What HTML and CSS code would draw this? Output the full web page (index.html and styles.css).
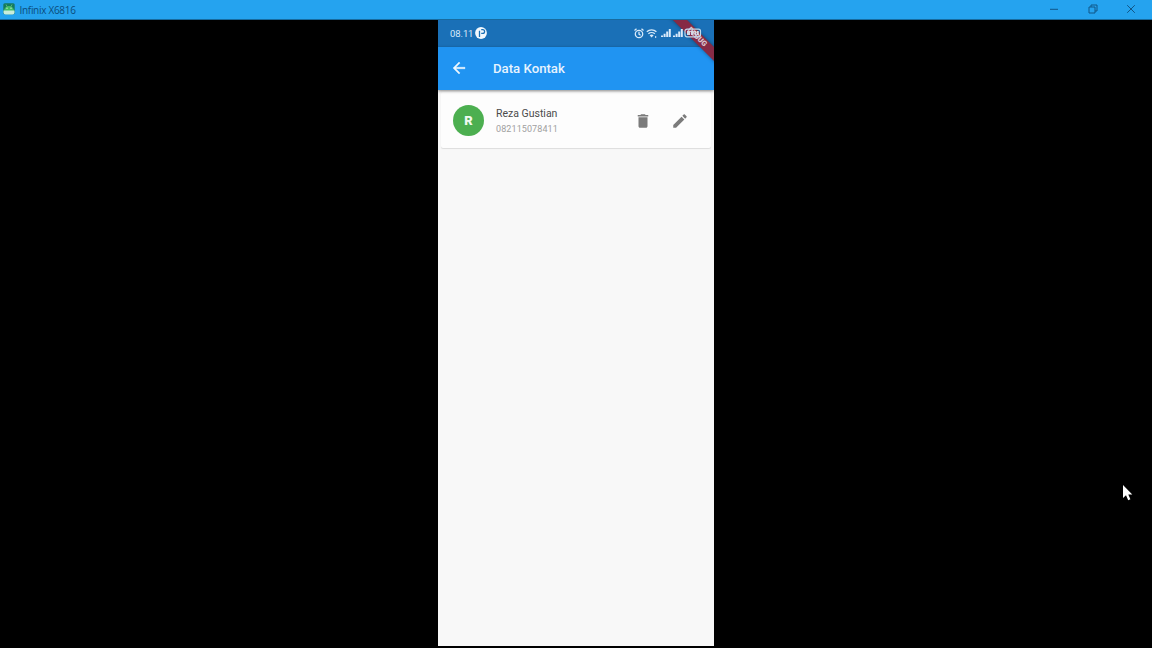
FILE: index.html
```html
<!DOCTYPE html>
<html lang="id">
<head>
<meta charset="utf-8">
<title>Infinix X6816</title>
<link rel="stylesheet" href="styles.css">
</head>
<body>
<div class="window">
  <header class="titlebar">
    <svg class="app-icon" width="12" height="12" viewBox="0 0 12 12">
      <rect x=".3" y=".3" width="11.4" height="11" rx="1.5" fill="#16795f"/>
      <path d="M1 8a5 5 0 0 1 10 0z" fill="#43bd68"/>
      <path d="M3 1.5l1 2M9 1.5l-1 2" stroke="#62c77c" stroke-width=".8"/>
      <path d="M.5 7.500h11v2a2 2 0 0 1-2 2h-7a2 2 0 0 1-2-2z" fill="#c9edda"/>
      <path d="M3.5 5.2h1M7.500 5.2h1" stroke="#fff"/>
    </svg>
    <span class="window-title">Infinix X6816</span>
    <div class="window-controls">
      <svg width="10" height="10" viewBox="0 0 10 10"><path d="M1 5.300h8"/></svg>
      <svg width="10" height="10" viewBox="0 0 10 10"><path d="M1 3h6v6H1zM3 3V1h6v6H7"/></svg>
      <svg width="10" height="10" viewBox="0 0 10 10"><path d="M1.200 1.200l7.600 7.600M8.800 1.200L1.200 8.800"/></svg>
    </div>
  </header>
  <main class="stage">
    <section class="phone">
      <div class="statusbar">
        <span class="clock">08.11</span>
        <svg class="notice" width="12" height="12" viewBox="0 0 12 12">
          <circle cx="6" cy="6" r="5.900" fill="#f2f8fd"/>
          <path d="M4.500 10V3.700M6.200 2.600h1.500a1.700 1.700 0 0 1 0 3.800H6.200" fill="none" stroke="#1a70b7" stroke-width="1.300"/>
        </svg>
        <div class="signals">
          <svg width="10" height="11" viewBox="0 0 10 11" fill="none" stroke="#d9eafa" stroke-width="1.300">
            <circle cx="5" cy="6" r="3.700"/><path d="M5 3.800v2.400l1.600 1M.5 2.500L2.500 .8M9.500 2.500L7.500 .8"/>
          </svg>
          <svg width="12" height="11" viewBox="0 0 12 11" fill="none" stroke="#d9eafa" stroke-width="1.300">
            <path d="M.8 3.800a7 7 0 0 1 9.600 0M2.400 5.800a4.700 4.700 0 0 1 6.400 0"/><path d="M3.600 7.300a3 3 0 0 1 4 0l-2 2.300z" fill="#d9eafa" stroke="none"/><path d="M9.700 8v2" stroke-width="1"/>
          </svg>
          <svg width="10" height="10" viewBox="0 0 10 10" fill="none" stroke="#d9eafa" stroke-width="2">
            <path d="M1 9V7.500M3.600 9V5.700M6.200 9V3.500M8.800 9V1"/>
          </svg>
          <svg width="10" height="10" viewBox="0 0 10 10" fill="none" stroke="#d9eafa" stroke-width="2">
            <path d="M1 9V7.500M3.600 9V5.700M6.200 9V3.500M8.800 9V1"/>
          </svg>
          <svg class="battery" width="18" height="10" viewBox="0 0 18 10">
            <path d="M3 1.200h11.500a2 2 0 0 1 2 2v3.600a2 2 0 0 1-2 2H3a2 2 0 0 1-2-2V3.200a2 2 0 0 1 2-2z" fill="none" stroke="#c4d9eb" stroke-width="1.200"/>
            <path d="M3 3h3v4H3zM7 3h2.500v4H7zM10.500 3h1.700v4h-1.700zM13 3h1.800v4H13z" fill="#d4dae6"/>
          </svg>
        </div>
      </div>
      <div class="appbar">
        <svg class="back" width="18" height="18" viewBox="0 0 24 24"><path d="M20 11H7.830l5.590-5.590L12 4l-8 8 8 8 1.410-1.410L7.830 13H20v-2z"/></svg>
        <h1 class="heading">Data Kontak</h1>
      </div>
      <article class="contact">
        <div class="avatar">R</div>
        <div class="details">
          <div class="name">Reza Gustian</div>
          <div class="number">082115078411</div>
        </div>
        <div class="actions">
          <svg width="18" height="18" viewBox="0 0 24 24"><path d="M6 19c0 1.100.9 2 2 2h8c1.100 0 2-.9 2-2V7H6v12zM19 4h-3.500l-1-1h-5l-1 1H5v2h14V4z"/></svg>
          <svg width="18" height="18" viewBox="0 0 24 24"><path d="M3 17.250V21h3.750L17.810 9.940l-3.750-3.750L3 17.250zM20.710 7.040c.390-.390.390-1.020 0-1.410l-2.340-2.340c-.390-.390-1.020-.390-1.410 0l-1.830 1.830 3.750 3.750 1.830-1.830z"/></svg>
        </div>
      </article>
      <div class="debug-banner">DEBUG</div>
    </section>
  </main>
</div>
<svg class="cursor" width="12" height="18" viewBox="0 0 12 18"><path d="M1 1v13l3-2.800 2.200 5 2.200-1-2.100-4.800h4z"/></svg>
</body>
</html>
```
FILE: styles.css
```css
* { box-sizing: border-box; }
body {
  margin: 0;
  background: #000;
  font-family: Roboto, "Liberation Sans", sans-serif;
}
svg { display: block; flex: none; }
.window {
  display: flex;
  flex-direction: column;
  height: 648px;
  overflow: hidden;
}
.titlebar {
  display: flex;
  align-items: center;
  flex: none;
  height: 20px;
  padding: 0 16px 1px 2.500px;
  background: #25a3ef;
  border-bottom: 1px solid #176b9f;
}
.window-title {
  margin-left: 5px;
  padding-top: 1px;
  font: 10px/12px "Open Sans", sans-serif;
  letter-spacing: -.300px;
  color: #0b4d7c;
}
.window-controls {
  display: flex;
  gap: 28.500px;
  margin-left: auto;
  fill: none;
  stroke: #115687;
}
.stage {
  display: flex;
  justify-content: center;
  flex: 1;
}
.phone {
  position: relative;
  width: 276px;
  height: 626px;
  overflow: hidden;
  background: #f8f8f8;
}
.statusbar {
  display: flex;
  align-items: center;
  height: 27px;
  padding: 0 12px 1px;
  background: #1a70b7;
}
.clock {
  font-size: 9.500px;
  letter-spacing: -.1px;
  color: #d9eafa;
}
.notice { margin-left: 2px; }
.signals {
  position: relative;
  z-index: 1;
  display: flex;
  align-items: center;
  gap: 2.500px;
  margin-left: auto;
}
.battery { margin-left: -1.500px; }
.appbar {
  position: relative;
  display: flex;
  align-items: center;
  height: 43px;
  padding: 0 0 1px 12px;
  background: #2094f2;
  box-shadow: 0 1px 3px #0007;
}
.back { fill: #eef7fe; stroke: #eef7fe; stroke-width: .5; }
.heading {
  margin: 0 0 0 25px;
  font-size: 13.200px;
  font-weight: 500;
  color: #e7f3fe;
}
.contact {
  display: flex;
  align-items: center;
  height: 56px;
  margin: 2px 3px 0;
  padding: 0 22px 0 12px;
  background: #fdfdfd;
  border-radius: 2px;
  box-shadow: 0 1px 1px #0000001c;
}
.avatar {
  display: grid;
  place-items: center;
  width: 31px;
  height: 31px;
  border-radius: 50%;
  background: #4caf50;
  color: #effaf0;
  font-size: 13px;
  font-weight: 900;
}
.details { margin-left: 12px; padding-top: 4px; }
.name {
  font-size: 10.500px;
  line-height: 14px;
  color: #4b4b4b;
}
.number {
  margin-top: 1px;
  font-size: 9px;
  line-height: 15px;
  letter-spacing: .1px;
  color: #a0a0a0;
}
.actions {
  display: flex;
  gap: 19px;
  margin-left: auto;
  padding-top: 1px;
  fill: #7b7b7b;
}
.debug-banner {
  position: absolute;
  top: 11px;
  right: -22px;
  width: 80px;
  height: 10px;
  padding-left: 3px;
  transform: rotate(45deg);
  background: #862a45;
  box-shadow: 0 0 4px #0006;
  color: #d8c3cf;
  font-size: 7.500px;
  font-weight: 900;
  line-height: 10px;
  text-align: center;
}
.cursor {
  position: absolute;
  top: 484px;
  left: 1122px;
  fill: #fff;
}
```
